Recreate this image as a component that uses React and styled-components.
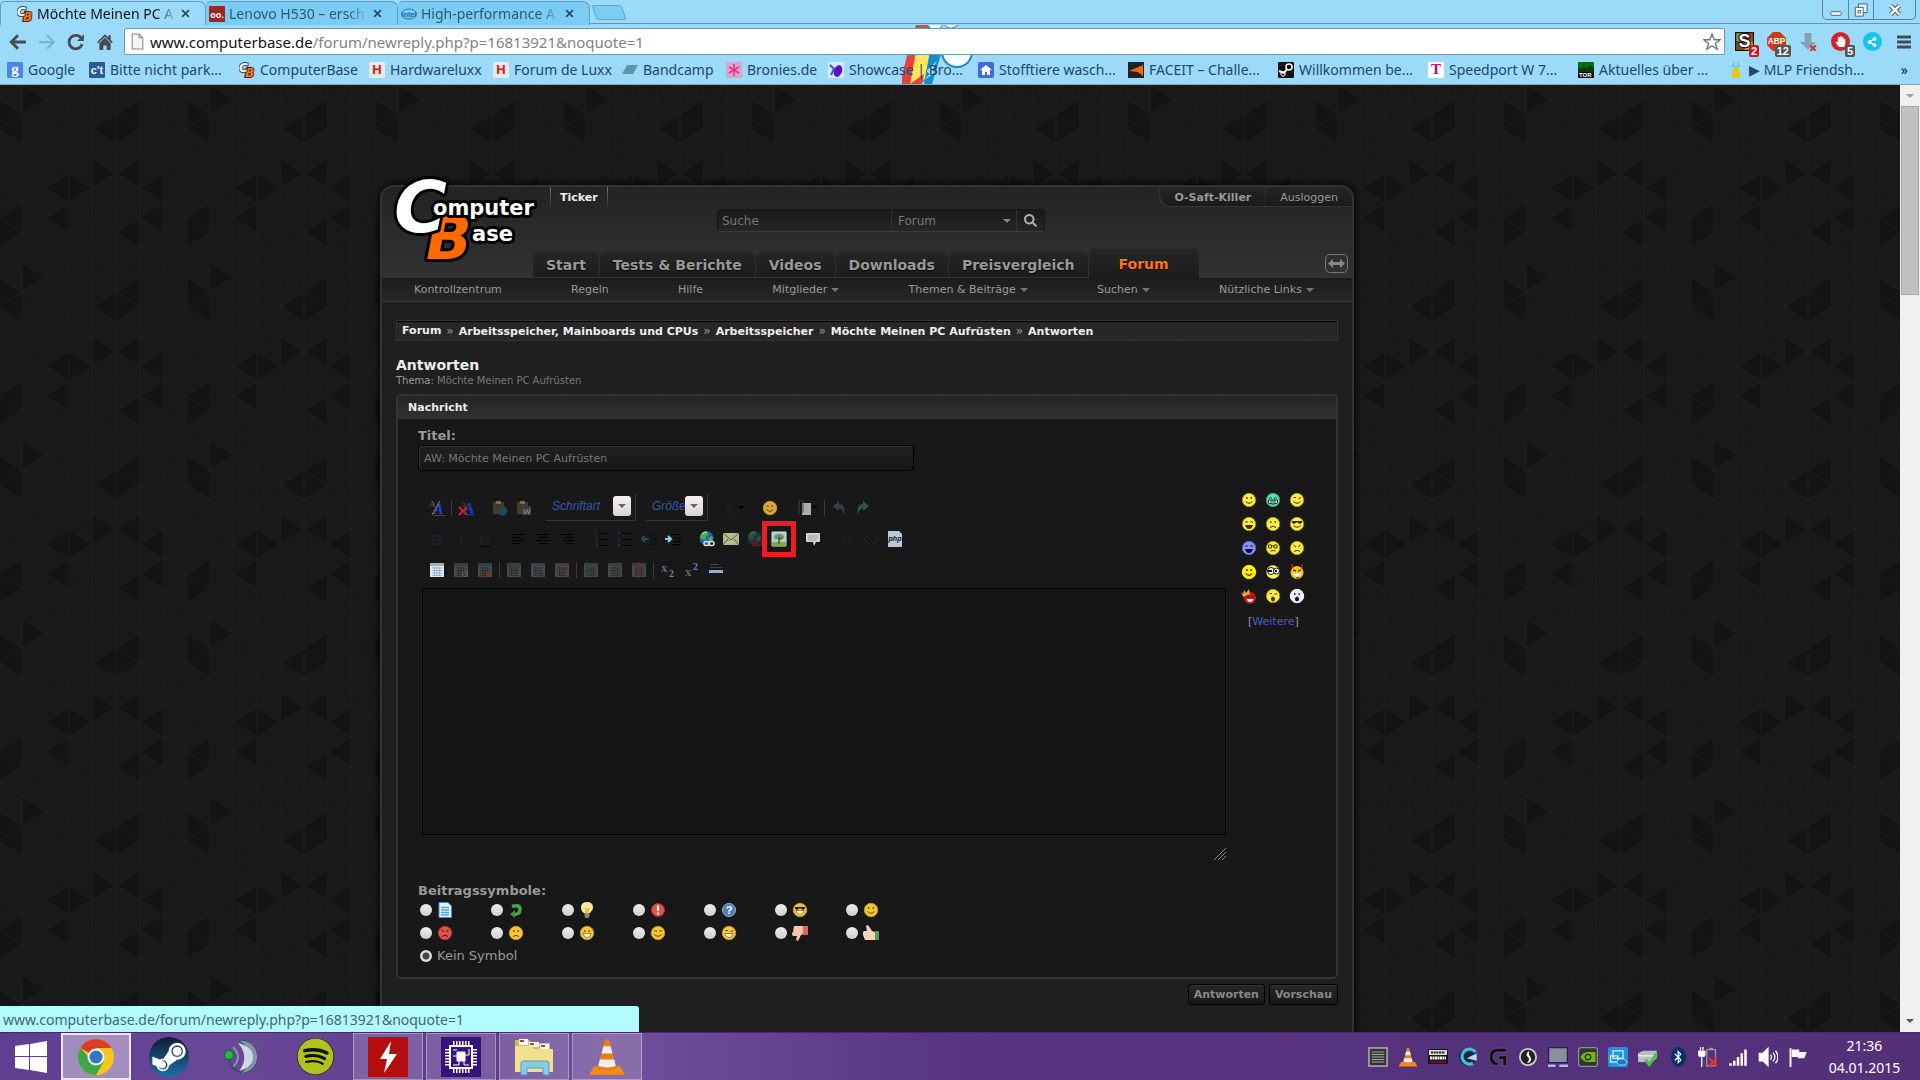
import React from 'react'
import styled, { createGlobalStyle, css } from 'styled-components'
import { FaSteamSymbol, FaSpotify, FaBluetoothB, FaHandPaper, FaShareAlt, FaSearch } from 'react-icons/fa'

// triangle pattern of the page background, 8 columns by 6 rows
const COL = 23.5
const HALF = 178 / 12
const DARK = [
    [0, 0, 'l'], [0, 1, 'r'], [7, 1, 'l'], [3, 0, 'r'], [3, 1, 'l'], [4, 11, 'r'], [0, 4, 'l'],
    [1, 5, 'l'], [1, 7, 'l'], [7, 4, 'r'], [5, 5, 'l'], [6, 5, 'r'], [5, 7, 'l'], [3, 7, 'l'],
    [3, 8, 'r'], [0, 8, 'l'],
]
const tri = ([c, r, dir]) => {
    const a = c * COL, b = a + COL, y = r * HALF
    return dir === 'l'
        ? `M${a} ${y}L${b} ${y - HALF}V${y + HALF}Z`
        : `M${b} ${y}L${a} ${y - HALF}V${y + HALF}Z`
}
const gridPath = () => {
    let d = ''
    for (let c = 0; c <= 8; c++) d += `M${c * COL} 0V178`
    for (let k = -8; k <= 20; k += 2) d += `M0 ${k * HALF}L188 ${(k + 8) * HALF}M0 ${k * HALF}L188 ${(k - 8) * HALF}`
    return d
}
const darkPath = DARK.map(tri).join('') + DARK.filter(d => d[1] > 10 || d[1] < 1).map(([c, r, dir]) => tri([c, r > 10 ? r - 12 : r + 12, dir])).join('')
const patternSvg = `<svg xmlns="http://www.w3.org/2000/svg" width="188" height="178"><path fill="#141414" d="${darkPath}"/><path fill="none" stroke="#1d1d1d" stroke-width="1" d="${gridPath()}"/></svg>`
const pattern = `url("data:image/svg+xml,${encodeURIComponent(patternSvg)}")`

const GlobalStyle = createGlobalStyle`
* { box-sizing: border-box; }
body { margin: 0; background: #181818; }
button, input, select, textarea { font-family: inherit; margin: 0; }
a { color: inherit; text-decoration: none; }
svg { display: block; flex-shrink: 0; }
`

const Screen = styled.div`
display: flex;
flex-direction: column;
height: 100vh;
overflow: hidden;
font-family: "DejaVu Sans", Verdana, sans-serif;
`

/* ---------- browser ---------- */

const Browser = styled.header`
position: relative;
background: #9bdaf8;
border-bottom: 1px solid #8aa9b3;
height: 85px;
flex-shrink: 0;
font-family: "Noto Sans", "Segoe UI", sans-serif;
color: #23456f;
`

const Mascot = styled.svg`
position: absolute;
left: 47%;
top: 25px;
`

const TabStrip = styled.div`
position: relative;
display: flex;
height: 24px;
border-bottom: 1px solid #6996ad;
`

const BrowserTab = styled.div`
display: flex;
align-items: center;
gap: 4px;
width: ${props => props.$active ? '206px' : '192px'};
height: 24px;
padding: 0 15px 0 ${props => props.$active ? '16px' : '3px'};
margin-top: 1px;
background: ${props => props.$active ? '#9bdaf8' : '#79cdf5'};
border: 1px solid #5f9fc0;
border-bottom: 0;
border-left-width: ${props => props.$active ? '1px' : '0'};
border-radius: 5px 7px 0 0;
z-index: ${props => props.$active ? 1 : 0};
color: ${props => props.$active ? '#111' : '#33566b'};
`

const TabTitle = styled.span`
flex: 1;
overflow: hidden;
white-space: nowrap;
font-size: 14px;
line-height: 20px;
mask-image: linear-gradient(90deg, #000 85%, transparent);
`

const TabClose = styled.button`
border: 0;
background: none;
padding: 0;
color: #37474f;
`

const NewTab = styled.button`
width: 30px;
height: 15px;
margin: 5px 0 0 4px;
background: #79cdf5;
border: 1px solid #63a5c6;
border-radius: 3px;
transform: skewX(20deg);
`

const WindowControls = styled.div`
display: flex;
margin-left: auto;
margin-right: 4px;
height: 20px;
border: 1px solid #56859b;
border-top: 0;
border-radius: 0 0 5px 5px;
`

const WindowButton = styled.button`
display: flex;
align-items: center;
justify-content: center;
width: ${props => props.$wide ? '42px' : '25px'};
padding: 0;
background: none;
border: 0;
border-left: ${props => props.$first ? '0' : '1px solid #56859b'};
`

const Toolbar = styled.div`
position: relative;
display: flex;
align-items: center;
height: 34px;
padding: 3px 0 2px 3px;
`

const ToolButton = styled.button`
display: flex;
align-items: center;
justify-content: center;
position: relative;
width: ${props => props.$ext ? '32px' : '29px'};
height: 26px;
padding: 0;
background: none;
border: 0;
`

const Count = styled.span`
position: absolute;
right: 1px;
bottom: -2px;
padding: 0 2px;
border-radius: 2px;
background: ${props => props.$red ? '#d01224' : '#555'};
color: #fff;
font: bold 11px/12px "Liberation Sans", sans-serif;
`

const AddressBar = styled.div`
display: flex;
align-items: center;
flex: 1;
height: 27px;
margin: 0 3px 0 5px;
padding: 0 3px 0 4px;
background: #fff;
border: 1px solid #6c9bb2;
border-radius: 2px;
font-size: 15px;
color: #828282;
white-space: nowrap;
b { font-weight: 400; color: #111; }
`

const Url = styled.span`
flex: 1;
padding-left: 4px;
`

const Bookmarks = styled.nav`
position: relative;
display: flex;
align-items: center;
height: 23px;
padding-left: 7px;
font-size: 14px;
`

const Bookmark = styled.a`
display: flex;
align-items: center;
gap: 5px;
width: ${props => props.$w}px;
white-space: nowrap;
`

const More = styled.button`
margin-left: auto;
padding: 0 12px;
border: 0;
background: none;
font-size: 14px;
color: #222;
`

/* ---------- page ---------- */

const Page = styled.main`
position: relative;
display: flex;
flex: 1;
min-height: 0;
background-color: #191919;
background-image: ${pattern};
background-position: 116px 29px;
`

const Content = styled.div`
display: grid;
grid-template-columns: 380fr minmax(0, 974px) 546fr;
flex: 1;
padding-top: 100px;
overflow: hidden;
`

const ScrollBar = styled.div`
display: flex;
flex-direction: column;
align-items: center;
justify-content: space-between;
width: 20px;
padding: 9px 0;
background: #f0f0f0;
`

const Thumb = styled.div`
width: 18px;
height: 189px;
margin: 8px 0 auto;
background: #c1c1c1;
border: 1px solid #a8a8a8;
`

const Frame = styled.div`
position: relative;
grid-column: 2;
min-height: 100%;
background: #202020ee;
border: 2px solid #333;
border-bottom: 0;
border-radius: 14px 14px 0 0;
box-shadow: 0 0 8px #000;
color: #999;
font-size: 11px;
`

const Logo = styled.svg`
position: absolute;
left: 8px;
top: -14px;
`

const Head = styled.div`
display: flex;
flex-direction: column;
height: 91px;
border-radius: 12px 12px 0 0;
background: linear-gradient(#232323, #323232);
border-bottom: 1px solid #333;
`

const TopLine = styled.div`
display: flex;
justify-content: space-between;
padding-left: 168px;
line-height: 22px;
`

const Ticker = styled.a`
height: 20px;
padding: 0 9px;
border: solid #666;
border-width: 0 1px;
border-image: linear-gradient(#777, #2a2a2a) 1;
color: #eee;
font-weight: bold;
`

const UserBar = styled.div`
display: flex;
height: 20px;
background: linear-gradient(#262626, #191919);
border: 1px solid #353535;
border-top: 0;
border-right: 0;
border-radius: 0 12px 0 12px;
a { padding: 0 14px; }
a + a { border-left: 1px dotted #3a3a3a; }
`

const Search = styled.form`
display: flex;
height: 23px;
width: 328px;
margin: 2px 0 0 335px;
background: linear-gradient(#1a1a1a, #262626);
border: 1px solid #151515;
border-bottom-color: #3a3a3a;
border-radius: 4px;
`

const SearchInput = styled.input`
width: 173px;
padding: 0 4px;
background: none;
border: 0;
color: #777;
font-size: 12px;
&::placeholder { color: #777; }
`

const SearchSelect = styled.label`
display: flex;
align-items: center;
flex: 1;
padding-right: 5px;
border: solid #333;
border-width: 0 1px;
select {
    flex: 1;
    appearance: none;
    padding: 0 6px;
    border: 0;
    background: none;
    color: #777;
    font-size: 12px;
}
`

const SearchButton = styled.button`
width: 27px;
display: flex;
align-items: center;
justify-content: center;
padding: 0;
border: 0;
background: none;
color: #aaa;
font-size: 13px;
`

const Tabs = styled.nav`
display: flex;
align-items: flex-end;
gap: 1px;
margin-top: auto;
padding-left: 151px;
padding-right: 4px;
`

const Tab = styled.a`
height: ${props => props.$active ? '29px' : '25px'};
padding: 0 ${props => props.$active ? '30px' : '13px'};
margin-bottom: ${props => props.$active ? '-1px' : '0'};
line-height: ${props => props.$active ? '30px' : '26px'};
background: linear-gradient(#252525, #1d1d1d);
border-radius: 6px 6px 0 0;
color: ${props => props.$active ? '#ff7410' : '#999'};
font-size: 14px;
font-weight: bold;
text-shadow: 0 1px 1px #000;
`

const WidthSwitch = styled.button`
align-self: center;
margin-left: auto;
display: flex;
align-items: center;
justify-content: center;
width: 23px;
height: 19px;
padding: 0;
border: 1px solid #777;
border-radius: 5px;
background: none;
`

const SubNav = styled.nav`
display: flex;
justify-content: space-between;
align-items: center;
height: 24px;
padding: 0 38px 0 32px;
background: linear-gradient(#1b1b1b, #282828);
border-bottom: 1px solid #343434;
a { display: flex; align-items: center; gap: 4px; }
`

const Inner = styled.div`
padding: 18px 14px 0;
`

const Crumbs = styled.div`
display: flex;
height: 21px;
padding: 0 5px;
line-height: 20px;
background: #272727;
border: 1px solid #343434;
box-shadow: inset 0 1px 1px #000;
white-space: nowrap;
a { color: #eee; font-weight: bold; }
a + a::before {
    content: '»';
    padding: 0 5px;
    color: #999;
    font-size: 12px;
    font-weight: 400;
}
`

const Heading = styled.h1`
margin: 16px 0 0;
font-size: 14px;
line-height: 17px;
color: #eee;
`

const Topic = styled.p`
margin: 0 0 7px;
font-size: 10px;
line-height: 13px;
color: #777;
b { font-weight: 400; color: #999; }
`

const Panel = styled.section`
border: 2px solid #333;
border-radius: 5px;
background: #181818;
`

const PanelTitle = styled.h2`
margin: 0;
padding: 0 10px;
height: 23px;
font-size: 11px;
line-height: 23px;
color: #eee;
background: linear-gradient(#242424, #323232);
`

const PanelBody = styled.div`
padding: 8px 20px 0;
min-height: 558px;
display: flex;
flex-direction: column;
`

const FieldLabel = styled.label`
display: block;
font-size: 13px;
font-weight: bold;
line-height: 18px;
color: #999;
`

const TitleInput = styled.input`
width: 496px;
height: 26px;
padding: 0 5px;
background: linear-gradient(#202020, #181818);
border: 1px solid #000;
border-radius: 3px;
box-shadow: inset 1px 1px 0 #333;
color: #777;
font-size: 11px;
`

const EditorArea = styled.div`
display: flex;
justify-content: space-between;
margin-top: 17px;
`

const Editor = styled.div`
flex: 1;
padding-top: 4px;
padding-left: 4px;
`

const EditorTools = styled.div`
display: flex;
align-items: center;
height: 31px;
padding-left: 3px;
gap: 10px;
`

const Group = styled.div`
display: flex;
align-items: center;
`

const EditorButton = styled.button`
position: relative;
display: flex;
align-items: center;
justify-content: center;
width: ${props => props.$w || 24}px;
height: 24px;
padding: 0;
border: 0;
background: none;
`

const Marker = styled.span`
position: absolute;
inset: -6px -5px;
border: 5px solid #ed1c24;
`

const Separator = styled.span`
width: 1px;
height: 16px;
margin: 0 2px;
background: #3a3a3a;
`

const Combo = styled.label`
display: flex;
align-items: center;
width: ${props => props.$w}px;
height: 27px;
padding: 0 4px 2px 6px;
border: solid #363636;
border-width: 0 1px 1px 0;
select {
    flex: 1;
    min-width: 0;
    appearance: none;
    padding: 0;
    border: 0;
    background: none;
    color: #3358ad;
    font: italic 12px "Liberation Sans", sans-serif;
}
span {
    display: flex;
    align-items: center;
    justify-content: center;
    width: 18px;
    height: 20px;
    border-radius: 3px;
    background: linear-gradient(#f6f3f5, #d9d3d6);
}
`

const TextArea = styled.textarea`
display: block;
width: 100%;
height: 247px;
margin-top: 3px;
background: #151515;
border: 1px solid #000;
resize: none;
color: #999;
`

const Grip = styled.svg`
margin: 13px 0 0 auto;
`

const Smileys = styled.aside`
width: 90px;
padding-left: 11px;
`

const SmileyGrid = styled.div`
display: grid;
grid-template-columns: repeat(3, 24px);
button {
    height: 24px;
    padding: 4px;
    border: 0;
    background: none;
}
`

const MoreSmileys = styled.p`
margin: 4px 0 0 11px;
line-height: 20px;
a { color: #3c62c8; }
`

const Symbols = styled.fieldset`
border: 0;
margin: auto 0 10px;
padding: 0;
`

const SymbolsTitle = styled.legend`
padding: 0;
font-size: 13px;
font-weight: bold;
line-height: 15px;
`

const SymbolGrid = styled.div`
display: grid;
grid-template-columns: repeat(7, 71px);
`

const SymbolOption = styled.label`
display: flex;
align-items: center;
gap: 5px;
height: 23px;
padding-left: 2px;
font-size: 13px;
input {
    appearance: none;
    width: 12px;
    height: 12px;
    border-radius: 50%;
    background: linear-gradient(#eee, #cfcfcf);
}
input:checked { background: radial-gradient(#444 0 3px, #ddd 4px); }
`

const Actions = styled.div`
display: flex;
justify-content: flex-end;
gap: 4px;
margin-top: 5px;
`

const ActionButton = styled.button`
height: 21px;
padding: 0 5px;
background: linear-gradient(#272727, #191919);
border: 1px solid #000;
border-radius: 3px;
box-shadow: inset 0 1px 0 #333;
color: #888;
font-size: 11px;
font-weight: bold;
`

const Status = styled.div`
position: absolute;
left: 0;
bottom: 0;
width: 639px;
height: 26px;
padding-left: 3px;
line-height: 27px;
background: #b1fbff;
border-top-right-radius: 3px;
color: #45666f;
font-family: "Noto Sans", "Segoe UI", sans-serif;
font-size: 14px;
`

/* ---------- taskbar ---------- */

const Taskbar = styled.footer`
display: flex;
align-items: center;
height: 48px;
flex-shrink: 0;
background: linear-gradient(90deg, #5f3d90, #6a4796 12%, #5d3a8b 25%, #6f4f9a 32%, #583481 50%, #533078);
border-top: 1px solid #46296b;
`

const StartButton = styled.button`
display: flex;
justify-content: center;
width: 61px;
padding: 0;
border: 0;
background: none;
`

const Task = styled.button`
display: flex;
align-items: center;
justify-content: center;
width: 70px;
height: 47px;
margin-right: 3px;
padding: 0;
border: 1px solid transparent;
background: none;
${props => props.$open && css`
background: #ffffff2e;
border-color: #ffffff55;
`}
${props => props.$active && css`
background: #ffffff66;
border: 2px solid #ffffffcc;
`}
`

const Tray = styled.div`
display: flex;
align-items: center;
margin-left: auto;
`

const TrayButton = styled.button`
display: flex;
align-items: center;
justify-content: center;
width: 30px;
padding: 0;
border: 0;
background: none;
`

const Clock = styled.time`
width: 107px;
padding-right: 4px;
color: #fff;
text-align: center;
font: 14px/22px "Noto Sans", "Segoe UI", sans-serif;
`

const Disc = styled.span`
display: flex;
align-items: center;
justify-content: center;
width: ${props => props.$w || props.$size}px;
height: ${props => props.$size}px;
border-radius: 50%;
background: ${props => props.$bg};
color: ${props => props.$fg || '#fff'};
font-size: ${props => props.$icon}px;
`

/* ---------- drawings ---------- */

function Cb() {
    return (
        <svg width="16" height="16" viewBox="0 0 16 16" fontFamily="DejaVu Sans" fontWeight="bold" fontStyle="italic" strokeWidth="2" paintOrder="stroke">
            <text x="6" y="15" fontSize="12" fill="#ff7410" stroke="#3b2a1a">B</text>
            <text x="0" y="10" fontSize="12" fill="#fff" stroke="#444">C</text>
        </svg>
    )
}

// square favicon with a letter
function Fav({ bg, fg = '#fff', t, size = 12, serif }) {
    return (
        <svg width="16" height="16">
            <rect width="16" height="16" fill={bg} rx="1" />
            <text x="8" y="12" textAnchor="middle" fontSize={size} fontWeight="bold" fill={fg} fontFamily={serif ? 'Liberation Serif' : 'Liberation Sans'}>{t}</text>
        </svg>
    )
}

function Draw({ s = 16, children, ...rest }) {
    return <svg width={s} height={s} viewBox="0 0 16 16" fill="none" {...rest}>{children}</svg>
}

function Caret({ fill = '#888', w = 8 }) {
    return <svg width={w} height={w / 2} viewBox="0 0 8 4"><path d="M0 0h8L4 4z" fill={fill} /></svg>
}

function CloseIcon() {
    return <Draw s={9}><path d="M2 2l12 12M14 2L2 14" stroke="#37474f" strokeWidth="3" /></Draw>
}

function Cone({ s }) {
    return (
        <Draw s={s}>
            <path d="M2.500 12h11l2 3.500H.5z" fill="#f58a1f" />
            <path d="M7.200.5h1.600L12 13q-4 1.500-8 0z" fill="#f07d14" />
            <path d="M6.500 3.500h3l.8 3H5.700zM5 9h6l.7 2.800q-3.700 1.200-7.400 0z" fill="#eee" />
        </Draw>
    )
}

const MOUTHS = {
    smile: 'M4.500 9.500q3.500 3.500 7 0',
    sad: 'M5 11.500q3-2.500 6 0',
    flat: 'M5.500 11q3-1 5 0',
}

function Face({ bg = '#ffee4a', line = '#3f3500', rim, mouth = 'smile', eyes = 'dot', s = 16 }) {
    return (
        <Draw s={s} stroke={line}>
            <circle cx="8" cy="8" r="6.700" fill={bg} stroke={rim || '#9a8c20'} />
            {eyes === 'dot' && <path d="M5.800 5v2M10.200 5v2" strokeWidth="1.200" />}
            {eyes === 'arc' && <path d="M4 6.500q1.500-2 3 0M9 6.500q1.500-2 3 0" />}
            {eyes === 'wink' && <path d="M4.500 5.500h2.500M9.500 6.500l2.500-1" />}
            {eyes === 'mad' && <path d="M4.500 5l2.500 2M11.500 5L9 7" />}
            {eyes === 'shades' && <path d="M3 5h10v1.500q-2.500 2.500-4 0h-2q-2 2.500-4 0z" fill="#222" stroke="none" />}
            {eyes === 'glasses' && <path d="M3.500 5h3v3h-3zM9 5h3v3H9zM6.500 6H9" />}
            {MOUTHS[mouth] && <path d={MOUTHS[mouth]} />}
            {mouth === 'laugh' && <path d="M4 9h8q-1 4-4 4T4 9z" fill={line} stroke="none" />}
            {mouth === 'grin' && <path d="M4 8.500h8q-1 4-4 4t-4-4z" fill="#fff" strokeWidth=".6" />}
            {mouth === 'teeth' && <path d="M3.500 8h9v3q-4.500 2.500-9 0zM6 8v4M8 8v4M10 8v4" fill="#fff" />}
            {mouth === 'open' && <ellipse cx="8" cy="11" rx="1.500" ry="2" fill={line} />}
        </Draw>
    )
}

function Lines({ d, stroke = '#000' }) {
    return <Draw stroke={stroke}><path d={d} /></Draw>
}

function Letter({ t, fill, italic, serif, underline }) {
    return (
        <Draw>
            <text x="8" y="14" textAnchor="middle" fontSize="15" fontWeight="bold" fontFamily={serif ? 'Liberation Serif' : 'Liberation Sans'} fontStyle={italic ? 'italic' : 'normal'} fill={fill}>{t}</text>
            {underline && <path d="M3 15.500h10" stroke="#000" />}
        </Draw>
    )
}

function Clipboard({ children }) {
    return (
        <Draw>
            <path d="M1 2h11v12H1z" fill="#4a3825" />
            <path d="M4 1h5v3H4z" fill="#6b6b6b" />
            {children}
        </Draw>
    )
}

function Grid({ bright, children }) {
    return (
        <Draw>
            <path d="M1 1h14v14H1z" fill={bright ? '#dfe8f2' : '#464a4e'} />
            <path d="M1 1h14v3H1z" fill={bright ? '#9fb6a0' : '#3a3f42'} />
            <path d="M3 6h10M3 8.500h10M3 11h10M3 13.500h10M5.500 5v9M8 5v9M10.500 5v9" stroke={bright ? '#8ba4bf' : '#25282a'} strokeWidth=".7" />
            {children}
        </Draw>
    )
}

function Globe({ dim, chain = '#ddd' }) {
    return (
        <Draw opacity={dim ? 0.4 : 1}>
            <circle cx="7.500" cy="7" r="7" fill="#1e5fb0" />
            <path d="M1 5q3-5 7-4l2 3-3 1-1 4-4-1zM9 7l4-2 1 3-3 3z" fill="#47b04a" />
            <path d="M3 3q2-2 5-2" stroke="#cfe6f5" />
            <rect x="5" y="10.500" width="5" height="4" rx="2" stroke={chain} strokeWidth="1.500" />
            <rect x="10" y="10.500" width="5" height="4" rx="2" stroke={chain} strokeWidth="1.500" />
        </Draw>
    )
}

function LogoArt() {
    return (
        <Logo width="150" height="100" fontFamily="DejaVu Sans" fontWeight="bold" fill="#fff" stroke="#000" strokeWidth="6" strokeLinejoin="round" paintOrder="stroke">
            <text x="36" y="86" fontSize="60" fontStyle="italic" fill="#ff6a00">B</text>
            <text x="4" y="59" fontSize="72" fontStyle="italic">C</text>
            <text x="43" y="42" fontSize="21">omputer</text>
            <text x="82" y="68" fontSize="21">ase</text>
        </Logo>
    )
}

/* ---------- data ---------- */

const bookmarks = [
    ['Google', 82, <Fav bg="#4c84f0" t="g" size={15} serif />],
    ['Bitte nicht park...', 150, <Fav bg="#2a5a9c" t="c't" size={11} />],
    ['ComputerBase', 130, <Cb />],
    ['Hardwareluxx', 124, <Fav bg="#e8e8e8" fg="#e01010" t="H" size={13} />],
    ['Forum de Luxx', 129, <Fav bg="#e8e8e8" fg="#e01010" t="H" size={13} />],
    ['Bandcamp', 104, <Draw><path d="M5 3h11l-5 9H0z" fill="#5b97a8" /></Draw>],
    ['Bronies.de', 102, <Draw><path d="M0 0h16v16H0z" fill="#d9a5d0" /><path d="M8 2v12M3 5l10 6M13 5L3 11" stroke="#e8327c" strokeWidth="1.500" /></Draw>],
    ['Showcase | Bro...', 150, <Draw><path d="M0 0h16v16H0z" fill="#d5e9fb" rx="3" /><ellipse cx="10" cy="9" rx="4" ry="6" fill="#5a10c8" transform="rotate(20 10 9)" /><path d="M2 3l4 4-3 6" stroke="#3a4fd8" strokeWidth="2" /></Draw>],
    ['Stofftiere wasch...', 150, <Draw><rect width="16" height="16" rx="2" fill="#4169e1" /><path d="M8 3l6 5h-2v5H9v-3H7v3H4V8H2z" fill="#fff" /></Draw>],
    ['FACEIT – Challe...', 150, <Draw><path d="M0 0h16v16H0z" fill="#222" /><path d="M15 3v11L10 10 1 9z" fill="#f26a10" /></Draw>],
    ['Willkommen be...', 150, <Draw><rect width="16" height="16" rx="1" fill="#111" /><circle cx="11" cy="5" r="3" stroke="#fff" strokeWidth="1.500" /><path d="M1 9l5 2 3-4" stroke="#fff" strokeWidth="2" /><circle cx="5" cy="12" r="2.200" stroke="#fff" /></Draw>],
    ['Speedport W 7...', 150, <Fav bg="#fff" fg="#d6006c" t="T" size={15} serif />],
    ['Aktuelles über ...', 150, <Draw><path d="M0 0h16v16H0z" fill="#0a0a0a" /><path d="M0 0h16v9H0z" fill="#0b6a12" /><path d="M0 5l3 2 3-3 3 3 3-4 4 3v4H0z" fill="#073d0a" /><text x="1" y="15" fontSize="6" fontWeight="bold" fill="#fff" fontFamily="Liberation Sans">TOR</text></Draw>],
    ['▶ MLP Friendsh...', 150, <Draw><path d="M6 6h4l2 7 1 3H3l1-3z" fill="#f2c200" /><path d="M8 3v3M5.500 5Q4 3 6 1M10.500 5Q12 3 10 1" stroke="#46a0d0" /></Draw>],
]

const smileys = [
    <Face />,
    <Face bg="#5fe0b0" line="#06382a" rim="#2c9a78" eyes="arc" mouth="teeth" />,
    <Face eyes="wink" />,
    <Face eyes="arc" mouth="laugh" />,
    <Face mouth="sad" />,
    <Face eyes="shades" />,
    <Face bg="#8f92f5" line="#0b0b30" rim="#5a5cc0" eyes="arc" mouth="laugh" />,
    <Face eyes="glasses" mouth="flat" />,
    <Face eyes="mad" mouth="sad" />,
    <Face bg="#fff200" line="#000" rim="#fff200" />,
    <Draw><circle cx="8" cy="8" r="6.700" fill="#fff04a" /><circle cx="6" cy="7" r="3.500" fill="#fff" stroke="#111" /><circle cx="11.500" cy="7" r="3" fill="#fff" stroke="#111" /><path d="M3 7h4M11 6v2" stroke="#111" strokeWidth="2" /></Draw>,
    <Draw><path d="M3 0v4M13 0v4" stroke="#b01010" strokeWidth="2" /><circle cx="8" cy="8.500" r="6.500" fill="#f0c81e" /><path d="M4 6l3 1M12 6L9 7" stroke="#c01010" strokeWidth="1.500" /><path d="M4 9.500h8q-1 3-4 3t-4-3z" fill="#fff" /><path d="M7 13h3l-1.500 3z" fill="#7a4510" /></Draw>,
    <Draw><circle cx="9" cy="10" r="6" fill="#c11a1a" /><path d="M0 4l2 2 1-4 2 3 3-4 1 5-7 3z" fill="#e8a640" /><path d="M6 8l2 1M12 8l-2 1" stroke="#300" /><path d="M5.500 11h7q-1 3-3.500 3t-3.500-3z" fill="#fff" /></Draw>,
    <Face eyes="wink" mouth="open" />,
    <Face bg="#e6edff" line="#111" rim="#fff" mouth="open" />,
]

const gold = { bg: '#f5c638', rim: '#c9941c', line: '#6b4300' }
const symbols = [
    ['Dokument', <Draw><path d="M2 .5h9L14.500 4v11.500H2z" fill="#e8f4ff" stroke="#3c8ad8" /><path d="M4 5.500h8M4 8h8M4 10.500h8M4 13h8" stroke="#4aa2ec" strokeWidth="1.500" /></Draw>],
    ['Antwort', <Draw><path d="M4 4.500Q12 2 12 7.500T5 12" stroke="#4ba54a" strokeWidth="3.500" /><path d="M7 8v8L2 12z" fill="#3f9440" /></Draw>],
    ['Idee', <Draw><path d="M8 0q6 0 6 5.500 0 3-3 5.500H5Q2 9 2 5.500 2 0 8 0z" fill="#fde9a0" /><path d="M6 5l2 2 2-2v6H6z" fill="#f2bf4a" /><path d="M5.500 11h5v3l-1 2h-3l-1-2z" fill="#888" /></Draw>],
    ['Achtung', <Draw><circle cx="8" cy="8" r="6.500" fill="#e2564a" stroke="#a83028" /><path d="M8 3.500v5.500M8 10.500v2" stroke="#fff" strokeWidth="2" /></Draw>],
    ['Frage', <Draw><circle cx="8" cy="8" r="6.500" fill="#4d80b8" stroke="#8fb4da" /><text x="8" y="12" textAnchor="middle" fontSize="11" fontWeight="bold" fill="#fff" fontFamily="Liberation Sans">?</text></Draw>],
    ['Cool', <Face {...gold} eyes="shades" mouth="grin" />],
    ['Lächeln', <Face {...gold} />],
    ['Böse', <Face bg="#dd5549" rim="#b5382f" line="#5b0c08" eyes="mad" mouth="sad" />],
    ['Traurig', <Face {...gold} mouth="sad" />],
    ['Grinsen', <Face {...gold} mouth="grin" />],
    ['Fröhlich', <Face {...gold} eyes="arc" />],
    ['Zwinkern', <Face {...gold} eyes="wink" mouth="grin" />],
    ['Daumen runter', <Draw><path d="M2 1h9v8l-2 1-3 6-2-1 1-4H1Q-1 9 1 7z" fill="#f7c3ad" /><path d="M11 1h5v9h-5z" fill="#d9695a" /></Draw>],
    ['Daumen hoch', <Draw><path d="M2 15h10V7L9 6 5 0 3 1l1 5H1Q-1 8 0 10z" fill="#fbd0bd" /><path d="M12 6h4v9h-4z" fill="#4f9f57" /></Draw>],
]

const tray = [
    ['Speicher', <Draw s={20}><path d="M0 0h16v16H0z" fill="#999" /><path d="M1.500 1.500h13v13h-13z" fill="#333" /><path d="M3 4h10M3 6h10M3 8h10M3 10h10M3 12h10" stroke="#aaa" strokeWidth=".8" /></Draw>],
    ['VLC', <Cone s={20} />],
    ['Sound Blaster', <svg width="20" height="16"><path d="M0 0h20v15H0z" fill="#16161a" /><path d="M1 1h18v5H1z" fill="#ddd" /><path d="M3 3.500h14" stroke="#222" strokeWidth="2" strokeDasharray="2 .7" /><path d="M2 9h16" stroke="#eee" strokeWidth="3" strokeDasharray="2 .5" /><path d="M2 13h16" stroke="#a02020" /></svg>],
    ['Daemon', <Draw s={20}><circle cx="8" cy="8" r="7" fill="#14283c" /><path d="M14 4A6 6 0 1 0 12 13" stroke="#3ec0d8" strokeWidth="2.500" /><path d="M7 9l8-4v6z" fill="#b8d8e8" /></Draw>],
    ['Logitech', <Draw s={20}><path d="M15 1H8Q1 1 1 8t7 7v-3Q4 12 4 8t4-4h7zM8.500 7H15v8h-3v-5H8.500z" fill="#111" stroke="#8a7a9a" strokeWidth=".4" /></Draw>],
    ['Flamme', <Draw s={20}><circle cx="8" cy="8" r="6.500" fill="#222" stroke="#ccc" strokeWidth="1.500" /><path d="M9 3q-4 3-1 5 2 2-1 5 5-1 3-5-2-2-1-5z" fill="#fff" /></Draw>],
    ['Monitor', <Draw s={20}><path d="M.500 .500h15v12H.500z" fill="#8b9097" stroke="#1b1d70" /><path d="M0 14h6v2H0zM9 14h7v2H9z" fill="#b5bcc4" /></Draw>],
    ['NVIDIA', <Draw s={20}><rect x=".5" y=".5" width="15" height="15" rx="2" fill="#30353a" stroke="#8b8f93" /><path d="M2 8q2-4 6-4h6v8H8q-4 0-6-4z" fill="#76b900" /><circle cx="8" cy="8" r="2.200" stroke="#1d2a08" /></Draw>],
    ['Intel', <Draw s={20}><rect width="16" height="16" rx="2" fill="#1d95dd" /><path d="M4 3h8v6H4zM2 7h6v5H2z" stroke="#d8f0ff" /><ellipse cx="11" cy="12" rx="4" ry="2.500" fill="#2c70c4" stroke="#cfe6ff" strokeWidth=".6" /></Draw>],
    ['Hardware entfernen', <Draw s={20}><path d="M0 5l4-2h11v6l-4 3H0z" fill="#b9bec2" /><path d="M0 7h14" stroke="#eee" /><path d="M6 10l3 4 6-9" stroke="#46c83c" strokeWidth="2.500" /></Draw>],
    ['Bluetooth', <Disc $size={20} $w={15} $bg="#0a2f66" $icon={14}><FaBluetoothB /></Disc>],
    ['Akku', <Draw s={20}><path d="M2 0v3M4 0v3" stroke="#fff" /><path d="M0 3h6v3q0 2-2 2H2Q0 8 0 6z" fill="#fff" /><path d="M3 8v8" stroke="#fff" /><path d="M7 2h7v13H7zM9 1h3" stroke="#999" /><path d="M9 9l6 6M15 9l-6 6" stroke="#e03030" strokeWidth="2" /></Draw>],
    ['Netzwerk', <Draw s={20} stroke="#fff" strokeWidth="2"><path d="M2 15v-2M5 15v-4M8 15V8M11 15V5M14 15V2" /></Draw>],
    ['Lautstärke', <Draw s={20} stroke="#fff"><path d="M1 5h3l4-4v14l-4-4H1z" fill="#fff" /><path d="M10 6q1.500 2 0 4M12 4.500q3 3.500 0 7M14 3q4 5 0 10" /></Draw>],
    ['Wartungscenter', <Draw s={20}><path d="M2 1v15" stroke="#fff" strokeWidth="1.500" /><path d="M3 2h6v2h6l-2 5H8V8H3z" fill="#fff" /></Draw>],
]

const tools2 = [
    [['Fett', <Letter t="B" fill="#1e1e30" />], ['Kursiv', <Letter t="I" fill="#1e1e30" italic serif />], ['Unterstrichen', <Letter t="U" fill="#1e1e30" underline />]],
    [['Links', <Lines d="M1 3.500h14M1 6.500h9M1 9.500h12M1 12.500h8" />], ['Zentriert', <Lines d="M1 3.500h14M4 6.500h8M1 9.500h14M4 12.500h8" />], ['Rechts', <Lines d="M1 3.500h14M6 6.500h9M3 9.500h12M7 12.500h8" />]],
    [
        ['Nummerierte Liste', <Draw stroke="#000"><path d="M6 2.500h10M6 8.500h10M6 14.500h10" /><path d="M2.500 0v4M2 6h2v2l-2 2h2M2 12h2v4H2" stroke="#2c2c50" /></Draw>],
        ['Liste', <Draw stroke="#000"><path d="M6 2.500h10M6 8.500h10M6 14.500h10" /><path d="M1 2h2M1 8h2M1 14h2" stroke="#2c2c60" strokeWidth="2" /></Draw>],
        ['Ausrücken', <Draw stroke="#111"><path d="M7 3.500h9M9 7.500h7M9 10.500h7M5 13.500h11" /><path d="M1 8h7M4 5L1 8l3 3" stroke="#22495c" strokeWidth="2" /></Draw>],
        ['Einrücken', <Draw stroke="#000"><path d="M6 3.500h10M9 7.500h7M9 10.500h7M6 13.500h10" /><path d="M0 8h6M3 5l3 3-3 3" stroke="#7fd3f2" strokeWidth="2" /></Draw>],
    ],
    [
        ['Link', <Globe />],
        ['E-Mail', <Draw><path d="M0 2h16v12H0z" fill="#b9b990" /><path d="M0 2l8 7 8-7M0 14l5-6M16 14l-5-6" stroke="#5b5b40" /></Draw>],
        ['Link entfernen', <Globe dim chain="#d02020" />],
        ['Grafik', <Draw><path d="M1 1h14v14H1z" fill="#a9cbe0" stroke="#d7e5d0" /><path d="M1 11h14v4H1z" fill="#83a850" /><path d="M3 7q0-4 5-4t5 4q-2 2-5 1-3 1-5-1z" fill="#6a9a50" /><path d="M8 6v7M8 9l3-2" stroke="#5b4f38" strokeWidth="1.500" /></Draw>, true],
    ],
    [['Zitat', <Draw><path d="M2 2h12q1 0 1 1v7q0 1-1 1h-3l-2 4-1-4H2q-1 0-1-1V3q0-1 1-1z" fill="#d5d5d5" /><path d="M3 5h10M3 7h10M3 9h8" stroke="#888" strokeWidth=".7" /></Draw>]],
    [
        ['Code', <Lines stroke="#202038" d="M6 2L4 14M12 2l-2 12M2 6h12M2 10h12" />],
        ['HTML', <Lines stroke="#2a2a2a" d="M6 3L1 8l5 5M10 3l5 5-5 5" />],
        ['PHP', <Draw><path d="M1 0h11l3 3v13H1z" fill="#b8c8dc" /><text x="8" y="10" textAnchor="middle" fontSize="7" fontWeight="bold" fontStyle="italic" fill="#111" fontFamily="Liberation Sans">php</text></Draw>],
    ],
]

const tools3 = [
    [['Tabelle', <Grid bright />], ['Tabelle bearbeiten', <Grid><circle cx="12" cy="12" r="2.500" stroke="#666" /></Grid>], ['Tabelle löschen', <Grid><circle cx="12" cy="12" r="3" fill="#6a3d22" /></Grid>]],
    [['Zeile davor', <Grid><path d="M15 4H4M7 1L3 4l4 3" stroke="#2b4a2b" strokeWidth="1.500" /></Grid>], ['Zeile danach', <Grid><path d="M15 12H6M9 9l-4 3 4 3" stroke="#2b4a2b" strokeWidth="1.500" /></Grid>], ['Zeile löschen', <Grid><path d="M1 8h14" stroke="#6a2828" strokeWidth="2" /></Grid>]],
    [['Spalte davor', <Grid><path d="M4 0v11M1 8l3 4 3-4" stroke="#2b4a2b" strokeWidth="1.500" /></Grid>], ['Spalte danach', <Grid><path d="M12 0v11M9 8l3 4 3-4" stroke="#2b4a2b" strokeWidth="1.500" /></Grid>], ['Spalte löschen', <Grid><path d="M8 0v16" stroke="#6a2828" strokeWidth="2" /></Grid>]],
    [
        ['Tiefgestellt', <Draw fontFamily="Liberation Serif" fontWeight="bold"><text x="1" y="10" fontSize="13" fill="#666">x</text><text x="9" y="15" fontSize="10" fill="#4f86c6">2</text></Draw>],
        ['Hochgestellt', <Draw fontFamily="Liberation Serif" fontWeight="bold"><text x="1" y="14" fontSize="13" fill="#666">x</text><text x="9" y="8" fontSize="10" fill="#4f86c6">2</text></Draw>],
        ['Linie', <Draw><path d="M2 2.500h9M2 5.500h12" stroke="#444" /><path d="M1 8h14v3H1z" fill="#8fb0dc" /></Draw>],
    ],
]

const Tool = ({ item: [name, icon, marked] }) => (
    <EditorButton type="button" aria-label={name}>{icon}{marked && <Marker />}</EditorButton>
)

function Chrome() {
    return (
        <Browser>
            <Mascot width="80" height="59">
                <path d="M14 0h14l-6 24-3 36H-2L6 26z" fill="#e8413a" />
                <path d="M14 26h14l-6 34H8z" fill="#ffe45c" />
                <path d="M28 26h12l-10 33h-8z" fill="#0f8fd0" />
                <path d="M36 34l-12 12 3 3-9 10 16-12-3-2z" fill="#9bdaf8" stroke="#0f8fd0" />
                <path d="M8 59l14-10-2 10z" fill="#e8413a" />
                <circle cx="55" cy="27" r="15" fill="#fff" stroke="#1c86bd" strokeWidth="2" />
                <path d="M22-6q10 20 20 4 4 12 22-4z" fill="#fff" stroke="#1c86bd" />
            </Mascot>
            <TabStrip>
                <BrowserTab $active>
                    <Cb /><TabTitle>Möchte Meinen PC A</TabTitle><TabClose aria-label="Schließen"><CloseIcon /></TabClose>
                </BrowserTab>
                <BrowserTab>
                    <Fav bg="#9a2a20" t="oo." size={9} /><TabTitle>Lenovo H530 – ersch</TabTitle><TabClose aria-label="Schließen"><CloseIcon /></TabClose>
                </BrowserTab>
                <BrowserTab>
                    <Draw><ellipse cx="8" cy="8" rx="7.500" ry="5" stroke="#2e77b8" /><text x="8" y="10.500" textAnchor="middle" fontSize="7" fontWeight="bold" fill="#1b5fa5" fontFamily="Liberation Sans">intel</text></Draw><TabTitle>High-performance A</TabTitle><TabClose aria-label="Schließen"><CloseIcon /></TabClose>
                </BrowserTab>
                <NewTab aria-label="Neuer Tab" />
                <WindowControls>
                    <WindowButton $first aria-label="Minimieren"><Draw s={14}><rect x="2" y="10" width="12" height="4" rx="1" fill="#fff" stroke="#35576a" /></Draw></WindowButton>
                    <WindowButton aria-label="Verkleinern"><Draw s={14}><path d="M5 1h10v10H5z" fill="#dff2fc" stroke="#35576a" /><path d="M1.500 5h9v10h-9z" fill="#fff" stroke="#35576a" /><path d="M4.500 8.500h3v3h-3z" stroke="#35576a" /></Draw></WindowButton>
                    <WindowButton $wide aria-label="Schließen"><Draw s={14}><path d="M3 3l10 10M13 3L3 13" stroke="#35576a" strokeWidth="5" /><path d="M3 3l10 10M13 3L3 13" stroke="#fff" strokeWidth="3" /></Draw></WindowButton>
                </WindowControls>
            </TabStrip>
            <Toolbar>
                <ToolButton aria-label="Zurück"><Draw s={18} stroke="#454b50" strokeWidth="2.500"><path d="M15 8H2M8 2L2 8l6 6" /></Draw></ToolButton>
                <ToolButton aria-label="Vorwärts"><Draw s={18} stroke="#79b3d0" strokeWidth="2"><path d="M1 8h13M8 2l6 6-6 6" /></Draw></ToolButton>
                <ToolButton aria-label="Neu laden"><Draw s={18} stroke="#454b50" strokeWidth="2.500"><path d="M13 5A6 6 0 1 0 13.500 10" /><path d="M15 1v6H9z" fill="#454b50" stroke="none" /></Draw></ToolButton>
                <ToolButton aria-label="Startseite"><Draw s={18}><path d="M8 1l7 7-1 1-6-6-6 6-1-1zM11 2h2v4l-2-2zM3 9l5-5 5 5v6H9.500v-4h-3v4H3z" fill="#454b50" /></Draw></ToolButton>
                <AddressBar>
                    <Draw s={17}><path d="M3 1h6.500L13 4.500V15H3z" fill="#f4f4f4" stroke="#888" /><path d="M9.500 1v3.500H13" stroke="#888" /></Draw>
                    <Url><b>www.computerbase.de</b>/forum/newreply.php?p=16813921&amp;noquote=1</Url>
                    <Draw s={18} stroke="#777" strokeWidth="1.200"><path d="M8 1l2 5h5.200l-4.200 3.300 1.600 5.200L8 11.300l-4.600 3.200L5 9.300.8 6H6z" /></Draw>
                </AddressBar>
                <ToolButton $ext aria-label="Stylish"><Draw s={19}><path d="M0 0h16v16H0z" fill="#111" /><path d="M1 1h7v7H1z" fill="#7a9c4a" /><path d="M8 1h7v7H8z" fill="#b0402c" /><path d="M1 8h7v7H1z" fill="#8a4a24" /><path d="M8 8h7v7H8z" fill="#d8b02c" /><text x="8" y="13" textAnchor="middle" fontSize="15" fontWeight="bold" fill="#fff" stroke="#111" strokeWidth="2" paintOrder="stroke" fontFamily="Liberation Sans">S</text></Draw><Count $red>2</Count></ToolButton>
                <ToolButton $ext aria-label="Adblock Plus"><Draw s={19}><path d="M5 0h6l5 5v6l-5 5H5l-5-5V5z" fill="#cf3a1c" /><text x="8" y="10" textAnchor="middle" fontSize="7" fontWeight="bold" fill="#fff" fontFamily="Liberation Sans">ABP</text></Draw><Count>12</Count></ToolButton>
                <ToolButton $ext aria-label="Download"><Draw s={18}><path d="M5 0h6v8h4l-7 7-7-7h4z" fill="#84a3b2" /><path d="M10 11l5 5M15 11l-5 5" stroke="#d83a3a" strokeWidth="2" /></Draw></ToolButton>
                <ToolButton $ext aria-label="AdBlock"><Disc $size={19} $bg="#d3202a" $icon={11}><FaHandPaper /></Disc><Count>5</Count></ToolButton>
                <ToolButton $ext aria-label="Teilen"><Disc $size={19} $bg="#14c4ee" $icon={10}><FaShareAlt /></Disc></ToolButton>
                <ToolButton $ext aria-label="Menü"><Draw stroke="#454b50" strokeWidth="3"><path d="M1 3h14M1 8h14M1 13h14" /></Draw></ToolButton>
            </Toolbar>
            <Bookmarks>
                {bookmarks.map(([name, w, icon], i) => <Bookmark key={i} href="#" $w={w}>{icon}{name}</Bookmark>)}
                <More aria-label="Weitere Lesezeichen">»</More>
            </Bookmarks>
        </Browser>
    )
}

function SiteHead() {
    return (
        <>
            <Head>
                <TopLine>
                    <Ticker href="#">Ticker</Ticker>
                    <UserBar><a href="#"><strong>O-Saft-Killer</strong></a><a href="#">Ausloggen</a></UserBar>
                </TopLine>
                <Search>
                    <SearchInput placeholder="Suche" aria-label="Suche" />
                    <SearchSelect>
                        <select aria-label="Bereich"><option>Forum</option></select>
                        <Caret />
                    </SearchSelect>
                    <SearchButton type="button" aria-label="Suchen"><FaSearch /></SearchButton>
                </Search>
                <Tabs>
                    {['Start', 'Tests & Berichte', 'Videos', 'Downloads', 'Preisvergleich'].map(t => <Tab key={t} href="#">{t}</Tab>)}
                    <Tab href="#" $active>Forum</Tab>
                    <WidthSwitch aria-label="Breite"><svg width="17" height="9"><path d="M0 4.500L5 0v3h7V0l5 4.500L12 9V6H5v3z" fill="#888" /></svg></WidthSwitch>
                </Tabs>
            </Head>
            <SubNav>
                {['Kontrollzentrum', 'Regeln', 'Hilfe'].map(t => <a key={t} href="#">{t}</a>)}
                {['Mitglieder', 'Themen & Beiträge', 'Suchen', 'Nützliche Links'].map(t => <a key={t} href="#">{t}<Caret fill="#777" /></a>)}
            </SubNav>
        </>
    )
}

function EditorBars() {
    return (
        <>
            <EditorTools>
                <Group>
                    <EditorButton type="button" aria-label="Editor wechseln"><Draw fontFamily="Liberation Serif" fontWeight="bold"><text x="0" y="7" fontSize="9" fill="#555">A</text><text x="5" y="14" fontSize="14" fontStyle="italic" fill="#1846e0">A</text><path d="M3 15L11 1" stroke="#888" /><path d="M5 15.500h11" stroke="#1846e0" /></Draw></EditorButton>
                    <Separator />
                    <EditorButton type="button" aria-label="Formatierung entfernen"><Draw fontFamily="Liberation Serif" fontWeight="bold"><text x="1" y="10" fontSize="12" fill="#333">A</text><text x="6" y="13" fontSize="14" fill="#1b3eb8">A</text><path d="M1 7l8 8M9 7l-8 8" stroke="#d81c1c" strokeWidth="2" /><path d="M8 14.500h8" stroke="#1b3eb8" /></Draw></EditorButton>
                </Group>
                <Group>
                    <EditorButton type="button" aria-label="Einfügen"><Clipboard><circle cx="11" cy="11" r="4.500" fill="#1d4a5c" /></Clipboard></EditorButton>
                    <EditorButton type="button" aria-label="Aus Word einfügen"><Clipboard><path d="M6 6h9v9H6z" fill="#3a4048" /><text x="7" y="14" fontSize="8" fill="#999" fontFamily="Liberation Sans">W</text></Clipboard></EditorButton>
                </Group>
                <Combo $w={90}><select aria-label="Schriftart"><option>Schriftart</option></select><span><Caret fill="#666" /></span></Combo>
                <Combo $w={62}><select aria-label="Größe"><option>Größe</option></select><span><Caret fill="#666" /></span></Combo>
                <Group>
                    <EditorButton type="button" $w={30} aria-label="Farbe"><Letter t="A" fill="#1d1d2c" /><Caret fill="#000" w={6} /></EditorButton>
                </Group>
                <EditorButton type="button" aria-label="Smileys"><Face {...gold} bg="#d8a93a" /></EditorButton>
                <Group>
                    <EditorButton type="button" $w={30} aria-label="Anhang"><Draw><path d="M6 3h9v12H6z" fill="#a9adb0" /><path d="M3 14V2q0-2 2-2t2 2v9q0 2-1.500 2" stroke="#444" /></Draw><Caret fill="#000" w={6} /></EditorButton>
                    <Separator />
                    <EditorButton type="button" aria-label="Rückgängig"><Draw><path d="M2 6l6-5v3q7 0 5 11Q12 9 8 8v3z" fill="#2d4350" /></Draw></EditorButton>
                    <EditorButton type="button" aria-label="Wiederholen"><Draw><path d="M14 6L8 1v3Q1 4 3 15q1-6 5-7v3z" fill="#30505a" /></Draw></EditorButton>
                </Group>
            </EditorTools>
            <EditorTools>
                {tools2.map((g, i) => <Group key={i}>{g.map(t => <Tool key={t[0]} item={t} />)}</Group>)}
            </EditorTools>
            <EditorTools>
                <Group>
                    {tools3.map((g, i) => (
                        <React.Fragment key={i}>
                            {i > 0 && <Separator />}
                            {g.map(t => <Tool key={t[0]} item={t} />)}
                        </React.Fragment>
                    ))}
                </Group>
            </EditorTools>
        </>
    )
}

function ReplyForm() {
    return (
        <Panel>
            <PanelTitle>Nachricht</PanelTitle>
            <PanelBody>
                <FieldLabel htmlFor="title">Titel:</FieldLabel>
                <TitleInput id="title" defaultValue="AW: Möchte Meinen PC Aufrüsten" />
                <EditorArea>
                    <Editor>
                        <EditorBars />
                        <TextArea aria-label="Nachricht" />
                        <Grip width="12" height="12" stroke="#888"><path d="M0 12L12 0M4 12l8-8M8 12l4-4" /></Grip>
                    </Editor>
                    <Smileys>
                        <SmileyGrid>
                            {smileys.map((s, i) => <button key={i} type="button" aria-label={`Smiley ${i + 1}`}>{s}</button>)}
                        </SmileyGrid>
                        <MoreSmileys>[<a href="#">Weitere</a>]</MoreSmileys>
                    </Smileys>
                </EditorArea>
                <Symbols>
                    <SymbolsTitle>Beitragssymbole:</SymbolsTitle>
                    <SymbolGrid>
                        {symbols.map(([name, icon]) => (
                            <SymbolOption key={name}><input type="radio" name="symbol" aria-label={name} />{icon}</SymbolOption>
                        ))}
                    </SymbolGrid>
                    <SymbolOption><input type="radio" name="symbol" defaultChecked />Kein Symbol</SymbolOption>
                </Symbols>
            </PanelBody>
        </Panel>
    )
}

function Desktop() {
    return (
        <Taskbar>
            <StartButton aria-label="Start"><svg width="32" height="32"><path d="M0 5l14-2v12H0zM15 3l17-3v15H15zM0 16h14v13L0 27zM15 16h17v16l-17-3z" fill="#fff" /></svg></StartButton>
            <Task $active aria-label="Chrome">
                <svg width="36" height="36" viewBox="0 0 36 36">
                    <circle cx="18" cy="18" r="18" fill="#f6c61c" />
                    <path d="M18 18L2.400 9A18 18 0 0 1 33.600 9H18z" fill="#dc3b2c" />
                    <path d="M2.400 9A18 18 0 0 0 18 36l8-14-8 4z" fill="#3da648" />
                    <circle cx="18" cy="18" r="8.500" fill="#f4f4f4" />
                    <circle cx="18" cy="18" r="6.500" fill="#3478bd" />
                </svg>
            </Task>
            <Task aria-label="Steam"><Disc $size={40} $bg="linear-gradient(#111c33, #1c6fa5)" $icon={38}><FaSteamSymbol /></Disc></Task>
            <Task aria-label="TeamSpeak">
                <svg width="38" height="38" fill="none">
                    <path d="M15 2q18-1 20 17-2 15-18 17 10-8 10-17T15 2z" fill="#8295a8" stroke="#3d4d60" />
                    <path d="M15 5q12 14 1 28 14-4 14-14T15 5z" fill="#cdd8e2" />
                    <path d="M10 9q10 10 0 20" stroke="#8295a8" strokeWidth="2" />
                    <circle cx="6" cy="17" r="4.500" fill="#26b83c" stroke="#0f6a20" />
                    <path d="M6 22q2 10 12 12" stroke="#3d4d60" strokeWidth="2" />
                </svg>
            </Task>
            <Task aria-label="Spotify"><Disc $size={37} $bg="#111" $fg="#aec41c" $icon={37}><FaSpotify /></Disc></Task>
            <Task $open aria-label="Blitz"><svg width="40" height="40"><path d="M0 0h40v40H0z" fill="#b30d0d" /><path d="M23 4L12 22h7l-3 14 13-19h-8z" fill="#fff" /></svg></Task>
            <Task $open aria-label="CPU-Z">
                <svg width="40" height="40" fill="none" stroke="#fff">
                    <path d="M0 0h40v40H0z" fill="#36127e" stroke="none" />
                    <path d="M9 9h22v22H9z" strokeWidth="2" />
                    <path d="M16 15h8v9h-8z" fill="#fff" />
                    <path d="M12 6h17M12 34h17M6 12v17M34 12v17" strokeWidth="4" strokeDasharray="1.500 1.500" />
                    <path d="M12 13h4M28 12v6h-4M12 28h6v-4M28 28h-5v-4M12 19h4" />
                </svg>
            </Task>
            <Task $open aria-label="Explorer">
                <svg width="40" height="38">
                    <path d="M1 2h14l3 3h18v29H1z" fill="#d8b850" />
                    <path d="M5 1h9v6H5zM15 4h10v5H15zM26 6h9v6h-9z" fill="#fff" />
                    <path d="M6 3h4M16 6h4M27 8h4" stroke="#c23a2a" strokeWidth="2" />
                    <path d="M1 8h16l3 3h19v23H1z" fill="#f4e08c" />
                    <path d="M7 37V25q0-2 3-2h22q3 0 3 2v12h-6v-7H13v7z" fill="#86cbea" stroke="#4a9fca" />
                </svg>
            </Task>
            <Task $open aria-label="VLC"><Cone s={38} /></Task>
            <Tray>
                {tray.map(([name, icon]) => <TrayButton key={name} aria-label={name}>{icon}</TrayButton>)}
                <Clock>21:36<br />04.01.2015</Clock>
            </Tray>
        </Taskbar>
    )
}

export default function App() {
    return (
        <Screen>
            <GlobalStyle />
            <Chrome />
            <Page>
                <Content>
                    <Frame>
                        <SiteHead />
                        <LogoArt />
                        <Inner>
                            <Crumbs>
                                <a href="#">Forum</a>
                                <a href="#">Arbeitsspeicher, Mainboards und CPUs</a>
                                <a href="#">Arbeitsspeicher</a>
                                <a href="#">Möchte Meinen PC Aufrüsten</a>
                                <a href="#">Antworten</a>
                            </Crumbs>
                            <Heading>Antworten</Heading>
                            <Topic><b>Thema:</b> Möchte Meinen PC Aufrüsten</Topic>
                            <ReplyForm />
                            <Actions>
                                <ActionButton>Antworten</ActionButton>
                                <ActionButton>Vorschau</ActionButton>
                            </Actions>
                        </Inner>
                    </Frame>
                </Content>
                <ScrollBar>
                    <Caret fill="#a0a0a0" />
                    <Thumb />
                    <Caret fill="#555" />
                </ScrollBar>
                <Status>www.computerbase.de/forum/newreply.php?p=16813921&amp;noquote=1</Status>
            </Page>
            <Desktop />
        </Screen>
    )
}
